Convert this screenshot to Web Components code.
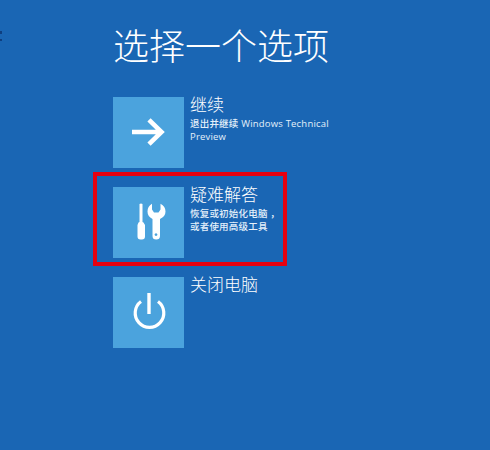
<!DOCTYPE html>
<html lang="zh">
<head>
<meta charset="utf-8">
<title>选择一个选项</title>
<style>
    html, body { margin: 0; height: 100%; }
    body {
        background: #1a66b4;
        color: #fff;
        font-family: "Open Sans", "Noto Sans CJK SC", sans-serif;
        overflow: hidden;
    }
</style>
</head>
<body>
<option-screen heading="选择一个选项">
    <option-tile label="继续">
        <svg slot="icon" width="71" height="71" viewBox="0 0 71 71">
            <path d="M19 35H48M36 22.800 48.500 35 36 47.200" fill="none" stroke="#fff" stroke-width="4.600"/>
        </svg>
        退出并继续 Windows Technical Preview
    </option-tile>
    <option-tile label="疑难解答" marked>
        <svg slot="icon" width="71" height="71" viewBox="0 0 71 71">
            <g transform="translate(24 16)" fill="#fff">
                <path d="M2.500 1q1.500-1 3 0V19L6.500 19.500 8 22V33.500Q8 36.500 5 36.500H3.500Q.5 36.500 .5 33.500V22L1.500 19.500 2.500 19z"/>
                <path fill-rule="evenodd" d="M15 .8V6.500L17 9.500H21.500L23.500 6.500V.8Q28.500 3.500 28.500 8.500 28.500 13.500 23 16V33Q23 36.500 19.200 36.500 15.500 36.500 15.500 33V16Q10.500 13.500 10.500 8.500 10.500 3.500 15 .8ZM19 30.200a1.400 1.400 0 1 0 .01 0Z"/>
            </g>
        </svg>
        恢复或初始化电脑 ，<br>或者使用高级工具
    </option-tile>
    <option-tile label="关闭电脑">
        <svg slot="icon" width="71" height="71" viewBox="0 0 71 71">
            <path d="M28 24.500A14.300 14.300 0 1 0 45 24.500" fill="none" stroke="#fff" stroke-width="3.200"/>
            <path d="M36 16V37" fill="none" stroke="#fff" stroke-width="3.400"/>
        </svg>
    </option-tile>
</option-screen>

<script>
    class OptionScreen extends HTMLElement {
        constructor() {
            super();
            this.attachShadow({mode: 'open'}).innerHTML = `
                <style>
                    :host {
                        display: flex;
                        flex-direction: column;
                        position: relative;
                        height: 100%;
                        padding: 20px 0 0 113px;
                        box-sizing: border-box;
                    }
                    h1 {
                        margin: 0 0 29px;
                        font: 300 36px/48px "Noto Sans CJK SC", sans-serif;
                    }
                    .rows {
                        display: flex;
                        flex-direction: column;
                        gap: 19px;
                    }
                    .specks {
                        position: absolute;
                        left: 0;
                        top: 31px;
                        width: 2px;
                        height: 10px;
                        background: linear-gradient(#0e3f80 30%, transparent 30%, transparent 75%, #0e3f80 75%);
                    }
                </style>
                <i class="specks"></i>
                <h1>${this.getAttribute('heading')}</h1>
                <div class="rows"><slot></slot></div>
            `;
        }
    }

    class OptionTile extends HTMLElement {
        constructor() {
            super();
            this.attachShadow({mode: 'open'}).innerHTML = `
                <style>
                    :host {
                        display: flex;
                        position: relative;
                        gap: 6px;
                        width: 150px;
                        height: 71px;
                    }
                    :host([marked])::after {
                        content: '';
                        position: absolute;
                        left: -20px;
                        top: -15px;
                        width: 194px;
                        height: 94px;
                        border: 4px solid #e6000f;
                        box-sizing: border-box;
                    }
                    .tile {
                        flex: none;
                        width: 71px;
                        height: 71px;
                        background: #4ba3dd;
                    }
                    .text { width: 146px; flex: none; }
                    .label {
                        margin: -5px 0 2px;
                        font: 300 17px/23px "Noto Sans CJK SC", sans-serif;
                    }
                    .sub {
                        font-size: 9.5px;
                        font-weight: 500;
                        letter-spacing: .2px;
                        line-height: 13px;
                        color: #e4f0fa;
                    }
                </style>
                <div class="tile"><slot name="icon"></slot></div>
                <div class="text">
                    <div class="label">${this.getAttribute('label')}</div>
                    <div class="sub"><slot></slot></div>
                </div>
            `;
        }
    }

    customElements.define('option-screen', OptionScreen);
    customElements.define('option-tile', OptionTile);
</script>
</body>
</html>
